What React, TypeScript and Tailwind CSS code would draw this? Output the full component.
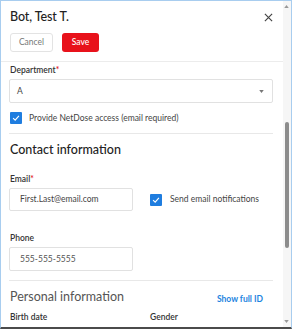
import React from "react";

const font = { fontFamily: 'Lato, "Noto Sans", sans-serif' };

function Check() {
  return (
    <span className="flex h-[12px] w-[12px] shrink-0 items-center justify-center rounded-[1px] bg-[#1f7ddf]">
      <svg viewBox="0 0 12 12" className="h-[10px] w-[10px]">
        <path d="M2.5 6.2 L5 8.5 L9.5 3.5" fill="none" stroke="white" strokeWidth="1.4" />
      </svg>
    </span>
  );
}

function Label({ text, required }: { text: string; required?: boolean }) {
  return (
    <div className="h-[12px] text-[8.5px] leading-[12px] font-semibold text-[#333]">
      {text}
      {required && <span className="text-[#e5141c]">*</span>}
    </div>
  );
}

export default function App() {
  return (
    <div
      style={font}
      className="relative flex h-[329px] w-[292px] overflow-hidden border-x border-t border-[#a8cdef] border-b-2 border-b-[#4b4b4b] bg-white"
    >
      <div className="min-w-0 flex-1">
        <div className="h-[60px] px-[9px] pt-[6px]">
          <div className="flex h-[20px] items-center justify-between">
            <span className="text-[12.5px] tracking-[-0.1px] font-medium text-[#222]">Bot, Test T.</span>
            <svg viewBox="0 0 10 10" className="mr-[1px] h-[9px] w-[9px]">
              <path d="M1 1 L9 9 M9 1 L1 9" stroke="#444" strokeWidth="1.3" />
            </svg>
          </div>
          <div className="mt-[6px] flex gap-[9px]">
            <button className="h-[19px] w-[43px] rounded-[3px] border border-[#e3e3e3] bg-white text-[8.5px] text-[#777]">
              Cancel
            </button>
            <button className="h-[19px] w-[37px] rounded-[3px] bg-[#e8121b] text-[8.5px] font-medium text-white">
              Save
            </button>
          </div>
        </div>
        <div className="h-px bg-[#ececec]" />
        <div className="pl-[8px] pr-[10px]">
          <div className="mt-[2px] pl-px">
            <Label text="Department" required />
          </div>
          <div className="mt-[3px] flex h-[24px] items-center justify-between rounded-[2px] border border-[#e1e1e1] pl-[7px] pr-[8px] text-[8.5px] text-[#444]">
            <span>A</span>
            <svg viewBox="0 0 6 4" className="h-[3px] w-[5px]">
              <path d="M0 0 L6 0 L3 4 Z" fill="#777" />
            </svg>
          </div>
          <div className="mt-[9px] flex h-[12px] items-center gap-[7px] pl-px">
            <Check />
            <span className="text-[8.5px] text-[#444]">Provide NetDose access (email required)</span>
          </div>
          <div className="mt-[9px] h-px bg-[#e8e8e8]" />
          <div className="mt-[7px] h-[18px] pl-px text-[12.5px] leading-[18px] font-medium text-[#222]">
            Contact information
          </div>
          <div className="mt-[14px] pl-px">
            <Label text="Email" required />
          </div>
          <div className="mt-[3px] flex h-[23px] items-center">
            <div className="flex h-full w-[124px] items-center rounded-[2px] border border-[#e1e1e1] pl-[10px] text-[8.5px] text-[#444]">
              First.Last@email.com
            </div>
            <div className="ml-[17px] flex items-center gap-[8px]">
              <Check />
              <span className="text-[8.5px] text-[#444]">Send email notifications</span>
            </div>
          </div>
          <div className="mt-[21px] pl-px">
            <Label text="Phone" />
          </div>
          <div className="mt-[3px] flex h-[24px] w-[124px] items-center rounded-[2px] border border-[#e1e1e1] pl-[10px] text-[8.5px] text-[#555]">
            555-555-5555
          </div>
          <div className="mt-[9px] h-px bg-[#e8e8e8]" />
          <div className="mt-[7px] flex h-[18px] items-center justify-between pl-px">
            <span className="text-[12.5px] text-[#555]">Personal information</span>
            <span className="mr-[10px] mt-[4px] text-[8.5px] font-bold text-[#1d84e0]">Show full ID</span>
          </div>
          <div className="mt-[5px] grid grid-cols-2 gap-[17px] pl-px">
            <Label text="Birth date" />
            <Label text="Gender" />
          </div>
          <div className="mt-[4px] grid grid-cols-2 gap-[17px]">
            <div className="h-[24px] rounded-[2px] border border-[#e1e1e1]" />
            <div className="h-[24px] rounded-[2px] border border-[#e1e1e1]" />
          </div>
        </div>
      </div>
      <div className="relative w-[8px] shrink-0 bg-[#f6f6f6]">
        <svg viewBox="0 0 6 4" className="absolute left-[1px] top-[4px] h-[3px] w-[5px]">
          <path d="M0 4 L6 4 L3 0 Z" fill="#999" />
        </svg>
        <div className="absolute left-[2px] top-[121px] h-[126px] w-[4px] rounded-full bg-[#8c8c8c]" />
        <svg viewBox="0 0 6 4" className="absolute bottom-[4px] left-[1px] h-[3px] w-[5px]">
          <path d="M0 0 L6 0 L3 4 Z" fill="#999" />
        </svg>
      </div>
    </div>
  );
}
